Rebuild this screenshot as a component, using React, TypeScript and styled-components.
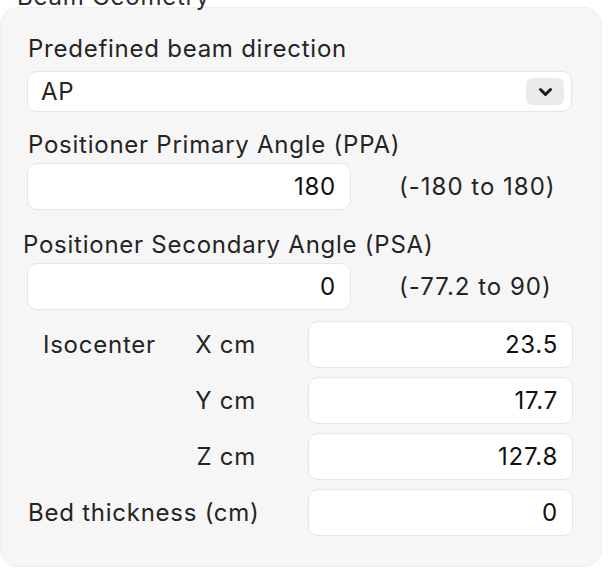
import React from 'react';
import styled, {createGlobalStyle} from 'styled-components';

const GlobalStyle = createGlobalStyle`
  body {
    margin: 0;
    background: #ffffff;
    font-family: Inter, "Noto Sans", "Liberation Sans", sans-serif;
    color: #242424;
    letter-spacing: 0.75px;
  }
`

const Page = styled.div`
  width: 610px;
  height: 570px;
  overflow: hidden;
`

const Title = styled.div`
  font-size: 24px;
  line-height: 26px;
  margin: -16px 0 -3px 17px;
  color: #2b2b2b;
`

const Panel = styled.div`
  width: 602px;
  height: 560px;
  box-sizing: border-box;
  background: #f6f6f6;
  border: 1px solid #efefef;
  border-radius: 18px;
  padding: 28px 0 0 26px;
  display: flex;
  flex-direction: column;
`

interface LabelProps {
  $indent?: number;
  $top?: number;
}

const FieldLabel = styled.div<LabelProps>`
  font-size: 24px;
  line-height: 26px;
  margin-left: ${(p) => p.$indent || 0}px;
  margin-top: ${(p) => p.$top || 0}px;
  margin-bottom: 5px;
`

const Select = styled.div`
  width: 545px;
  height: 41px;
  box-sizing: border-box;
  margin-top: 4px;
  background: #ffffff;
  border: 1px solid #e6e6e6;
  border-radius: 10px;
  display: flex;
  align-items: center;
  justify-content: space-between;
  padding: 0 7px 0 13px;
  font-size: 24px;
`

const ChevronButton = styled.div`
  width: 38px;
  height: 27px;
  border-radius: 6px;
  background: #ebebeb;
  display: flex;
  align-items: center;
  justify-content: center;
`

const InputRow = styled.div`
  display: flex;
  align-items: center;
  gap: 48px;
`

interface InputProps {
  $width: number;
}

const NumberInput = styled.input<InputProps>`
  width: ${(p) => p.$width}px;
  height: 47px;
  box-sizing: border-box;
  background: #ffffff;
  border: 1px solid #e6e6e6;
  border-radius: 10px;
  padding: 0 14px;
  text-align: right;
  font-family: inherit;
  font-size: 24px;
  letter-spacing: 0.75px;
  color: #111;
  outline: none;
`

const Range = styled.span`
  font-size: 24px;
  letter-spacing: 1px;
  color: #242424;
`

const IsoGrid = styled.div`
  display: grid;
  grid-template-columns: 140px 140px 265px;
  grid-auto-rows: 46px;
  row-gap: 10px;
  align-items: center;
  margin-top: 11px;
  margin-left: 1px;
`

interface CellProps {
  $align?: string;
  $span?: number;
  $indent?: number;
  $gap?: number;
}

const GridLabel = styled.div<CellProps>`
  font-size: 24px;
  text-align: ${(p) => p.$align || 'left'};
  grid-column: ${(p) => (p.$span ? `span ${p.$span}` : 'auto')};
  padding-left: ${(p) => p.$indent || 0}px;
  padding-right: ${(p) => p.$gap || 0}px;
`

const Chevron = () => (
  <svg width="15" height="10" viewBox="0 0 15 10">
    <polyline points="2.5,2.5 7.5,7.5 12.5,2.5" fill="none" stroke="#1a1a1a" strokeWidth="3" strokeLinecap="round" strokeLinejoin="round"/>
  </svg>
)

const isoAxes = [
  {axis: 'X cm', value: '23.5'},
  {axis: 'Y cm', value: '17.7'},
  {axis: 'Z cm', value: '127.8'},
]

const App = () => {
  return (
    <Page>
      <GlobalStyle/>
      <Title>Beam Geometry</Title>
      <Panel>
        <FieldLabel $indent={1}>Predefined beam direction</FieldLabel>
        <Select>
          <span>AP</span>
          <ChevronButton><Chevron/></ChevronButton>
        </Select>

        <FieldLabel $indent={1} $top={20}>Positioner Primary Angle (PPA)</FieldLabel>
        <InputRow>
          <NumberInput $width={324} defaultValue="180" readOnly/>
          <Range>(-180 to 180)</Range>
        </InputRow>

        <FieldLabel $indent={-4} $top={22}>Positioner Secondary Angle (PSA)</FieldLabel>
        <InputRow>
          <NumberInput $width={324} defaultValue="0" readOnly/>
          <Range>(-77.2 to 90)</Range>
        </InputRow>

        <IsoGrid>
          {isoAxes.map((row, i) => (
            <React.Fragment key={row.axis}>
              <GridLabel $indent={15}>{i === 0 ? 'Isocenter' : ''}</GridLabel>
              <GridLabel $align="right" $gap={52}>{row.axis}</GridLabel>
              <NumberInput $width={265} defaultValue={row.value} readOnly/>
            </React.Fragment>
          ))}
          <GridLabel $span={2}>Bed thickness (cm)</GridLabel>
          <NumberInput $width={265} defaultValue="0" readOnly/>
        </IsoGrid>
      </Panel>
    </Page>
  );
};

export default App;
